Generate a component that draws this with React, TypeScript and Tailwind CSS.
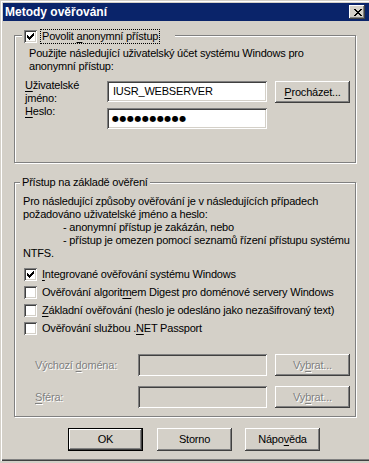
import React from "react";

const sunken =
  "shadow-[inset_1px_1px_0_#808080,inset_-1px_-1px_0_#ffffff,inset_2px_2px_0_#404040,inset_-2px_-2px_0_#d4d0c8]";
const raised =
  "shadow-[inset_-1px_-1px_0_#404040,inset_1px_1px_0_#ffffff,inset_-2px_-2px_0_#808080,inset_2px_2px_0_#d4d0c8]";
const etched = "border border-[#808080] shadow-[inset_1px_1px_0_#ffffff,1px_1px_0_#ffffff]";
const disabledText = "text-[#808080] [text-shadow:1px_1px_0_#ffffff]";

function U({ children }: { children: React.ReactNode }) {
  return <span className="underline underline-offset-[2px]">{children}</span>;
}

function CheckMark() {
  const px = [
    [6, 0], [5, 1], [6, 1], [0, 2], [4, 2], [5, 2], [6, 2],
    [0, 3], [1, 3], [3, 3], [4, 3], [5, 3], [0, 4], [1, 4], [2, 4], [3, 4], [4, 4],
    [1, 5], [2, 5], [3, 5], [2, 6],
  ];
  return (
    <svg width="7" height="7" viewBox="0 0 7 7" shapeRendering="crispEdges">
      {px.map(([x, y]) => (
        <rect key={x + "-" + y} x={x} y={y} width="1" height="1" fill="#000" />
      ))}
    </svg>
  );
}

function Check({ checked }: { checked?: boolean }) {
  return (
    <span className={["flex items-center justify-center w-[13px] h-[13px] shrink-0 bg-white", sunken].join(" ")}>
      {checked && <CheckMark />}
    </span>
  );
}

function Btn({
  children, className, disabled, isDefault,
}: { children: React.ReactNode; className: string; disabled?: boolean; isDefault?: boolean }) {
  return (
    <div
      className={[
        "flex items-center justify-center bg-[#d4d0c8] w-[75px]",
        isDefault ? "border border-black" : "",
        raised,
        disabled ? disabledText : "",
        className,
      ].join(" ")}
    >
      {children}
    </div>
  );
}

function CloseX() {
  const px = [
    [0, 0], [1, 0], [6, 0], [7, 0],
    [1, 1], [2, 1], [5, 1], [6, 1],
    [2, 2], [3, 2], [4, 2], [5, 2],
    [3, 3], [4, 3],
    [2, 4], [3, 4], [4, 4], [5, 4],
    [1, 5], [2, 5], [5, 5], [6, 5],
    [0, 6], [1, 6], [6, 6], [7, 6],
  ];
  return (
    <svg width="8" height="7" viewBox="0 0 8 7" shapeRendering="crispEdges">
      {px.map(([x, y]) => (
        <rect key={x + "-" + y} x={x} y={y} width="1" height="1" fill="#000" />
      ))}
    </svg>
  );
}

export default function App() {
  return (
    <div
      className="w-[369px] h-[463px] bg-[#d4d0c8] overflow-hidden text-black text-[11px] leading-[13px] tracking-[-0.2px]"
      style={{ fontFamily: "Tahoma, 'Liberation Sans', Arial, sans-serif" }}
    >
      <div className="w-[369px] h-[461px] pt-[3px] shadow-[inset_1px_1px_0_#d4d0c8,inset_2px_2px_0_#ffffff,inset_0_-1px_0_#404040,inset_0_-2px_0_#808080]">
        {/* title bar */}
        <div className="ml-[3px] h-[18px] bg-[#0a246a] flex items-center justify-between pl-[2px] pr-[4px]">
          <span className="text-white font-bold text-[12px] tracking-normal">Metody ověřování</span>
          <span className={["flex items-center justify-center w-[16px] h-[14px] bg-[#d4d0c8] pl-[1px]", raised].join(" ")}>
            <CloseX />
          </span>
        </div>

        {/* anonymous access group */}
        <div className={["relative ml-[14px] mt-[14px] w-[342px] h-[128px]", etched].join(" ")}>
          <div className="absolute left-[7px] top-[-6px] flex items-center bg-[#d4d0c8] pl-[2px] pr-[16px]">
            <Check checked />
            <span className="ml-[4px] px-[1px] outline outline-1 outline-dotted outline-black">
              Povolit <U>a</U>nonymní přístup
            </span>
          </div>
          <p className="pl-[14px] mt-[11px]">
            Použijte následující uživatelský účet systému Windows pro
            <br />
            anonymní přístup:
          </p>
          <div className="flex mt-[6px]">
            <div className="w-[92px] pl-[10px]">
              <U>U</U>živatelské
              <br />
              jméno:
            </div>
            <div className={["mt-[2px] w-[160px] h-[21px] bg-white flex items-center pl-[6px]", sunken].join(" ")}>
              IUSR_WEBSERVER
            </div>
            <Btn className="ml-[8px] mt-[2px] h-[22px]">
              <span>
                <U>P</U>rocházet...
              </span>
            </Btn>
          </div>
          <div className="flex">
            <div className="w-[92px] pl-[10px]">
              <U>H</U>eslo:
            </div>
            <div className={["mt-[3px] w-[160px] h-[21px] bg-white flex items-center pl-[5px]", sunken].join(" ")}>
              <span className="text-[8px] tracking-[0.5px]" style={{ fontFamily: "'DejaVu Sans', sans-serif" }}>
                ●●●●●●●●●●
              </span>
            </div>
          </div>
        </div>

        {/* authenticated access group */}
        <div className={["relative ml-[14px] mt-[19px] w-[342px] h-[235px]", etched].join(" ")}>
          <div className="absolute left-[5px] top-[-7px] bg-[#d4d0c8] px-[2px]">Přístup na základě ověření</div>
          <div className="pl-[8px] mt-[12px]">
            <p>Pro následující způsoby ověřování je v následujících případech</p>
            <p>požadováno uživatelské jméno a heslo:</p>
            <p className="pl-[40px]">- anonymní přístup je zakázán, nebo</p>
            <p className="pl-[40px]">- přístup je omezen pomocí seznamů řízení přístupu systému</p>
            <p>NTFS.</p>
          </div>
          <div className="mt-[5px] pl-[9px] flex flex-col">
            <label className="flex items-center h-[18px]">
              <Check checked />
              <span className="ml-[5px]">
                <U>I</U>ntegrované ověřování systému Windows
              </span>
            </label>
            <label className="flex items-center h-[18px]">
              <Check />
              <span className="ml-[5px]">
                Ověřování algorit<U>m</U>em Digest pro doménové servery Windows
              </span>
            </label>
            <label className="flex items-center h-[18px]">
              <Check />
              <span className="ml-[5px]">
                <U>Z</U>ákladní ověřování (heslo je odesláno jako nezašifrovaný text)
              </span>
            </label>
            <label className="flex items-center h-[18px]">
              <Check />
              <span className="ml-[5px]">
                Ověřování službou .<U>N</U>ET Passport
              </span>
            </label>
          </div>
          <div className="flex items-center mt-[17px]">
            <div className={["w-[123px] pl-[20px]", disabledText].join(" ")}>
              Výchozí <U>d</U>oména:
            </div>
            <div className={["w-[129px] h-[22px]", sunken].join(" ")} />
            <Btn disabled className="ml-[8px] h-[22px]">
              <span>
                Vy<U>b</U>rat...
              </span>
            </Btn>
          </div>
          <div className="flex items-center mt-[10px]">
            <div className={["w-[123px] pl-[20px]", disabledText].join(" ")}>
              <U>S</U>féra:
            </div>
            <div className={["w-[129px] h-[22px]", sunken].join(" ")} />
            <Btn disabled className="ml-[8px] h-[22px]">
              <span>
                Vy<U>b</U>rat...
              </span>
            </Btn>
          </div>
        </div>

        {/* dialog buttons */}
        <div className="flex mt-[11px] ml-[68px]">
          <Btn isDefault className="h-[23px]">OK</Btn>
          <Btn className="ml-[14px] h-[23px]">Storno</Btn>
          <Btn className="ml-[13px] h-[23px]">
            <span>
              Nápo<U>v</U>ěda
            </span>
          </Btn>
        </div>
      </div>
    </div>
  );
}
